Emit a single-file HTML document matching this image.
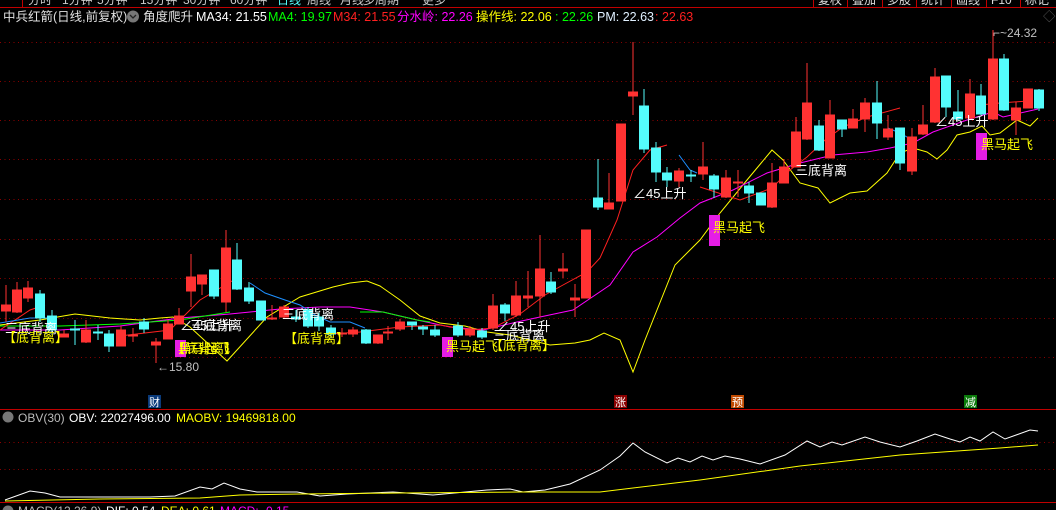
<!DOCTYPE html>
<html><head><meta charset="utf-8"><style>
html,body{margin:0;padding:0;background:#000;width:1056px;height:510px;overflow:hidden}
svg{display:block}
text{font-family:"Liberation Sans","Noto Sans CJK SC",sans-serif}
</style></head><body>
<svg width="1056" height="510" viewBox="0 0 1056 510" xmlns="http://www.w3.org/2000/svg">
<rect width="1056" height="510" fill="#000"/>
<!-- top menu (cut) -->
<g font-size="12" fill="#ccc">
<text x="28" y="4">分时</text><text x="62" y="4">1分钟</text><text x="97" y="4">5分钟</text><text x="140" y="4">15分钟</text><text x="183" y="4">30分钟</text><text x="230" y="4">60分钟</text>
<text x="277" y="4" fill="#55ffff">日线</text><text x="307" y="4">周线</text><text x="340" y="4">月线</text><text x="363" y="4">多周期</text><text x="422" y="4">更多</text>
</g>
<g stroke="#c00000" fill="none">
<line x1="0" y1="7.5" x2="1056" y2="7.5"/>
<line x1="22.5" y1="0" x2="22.5" y2="7"/>
<line x1="813.5" y1="0" x2="813.5" y2="7"/><line x1="847.5" y1="0" x2="847.5" y2="7"/><line x1="882.5" y1="0" x2="882.5" y2="7"/><line x1="916.5" y1="0" x2="916.5" y2="7"/><line x1="951.5" y1="0" x2="951.5" y2="7"/><line x1="986.5" y1="0" x2="986.5" y2="7"/><line x1="1020.5" y1="0" x2="1020.5" y2="7"/>
</g>
<g font-size="12" fill="#ddd"><text x="818" y="4">复权</text><text x="852" y="4">叠加</text><text x="887" y="4">多股</text><text x="921" y="4">统计</text><text x="956" y="4">画线</text><text x="991" y="4">F10</text><text x="1025" y="4">标记</text></g>
<!-- header -->
<g font-size="12.5">
<text x="3" y="21" fill="#e0e0e0">中兵红箭(日线,前复权)</text>
<circle cx="133" cy="16.5" r="6" fill="#777"/><path d="M130 15l3 3 3-3" stroke="#222" stroke-width="1.3" fill="none"/>
<text x="143" y="21" fill="#e0e0e0">角度爬升</text>
<text x="196" y="21" fill="#fff">MA34: 21.55</text>
<text x="268" y="21" fill="#00ff00">MA4: 19.97</text>
<text x="333" y="21" fill="#ff2020">M34: 21.55</text>
<text x="397" y="21" fill="#ff00ff">分水岭: 22.26</text>
<text x="476" y="21" fill="#ffff00">操作线: 22.06</text>
<text x="555" y="21" fill="#00ff00">: 22.26</text>
<text x="597" y="21" fill="#e0f0ff">PM: 22.63</text>
<text x="655" y="21" fill="#ff2020">: 22.63</text>
<text x="1043" y="21" fill="#555">◇</text>
</g>
<!-- grid -->
<g stroke="#8a0000" stroke-dasharray="1 3.5">
<line x1="0" y1="42.5" x2="1056" y2="42.5"/><line x1="0" y1="81.5" x2="1056" y2="81.5"/><line x1="0" y1="120.5" x2="1056" y2="120.5"/><line x1="0" y1="159.5" x2="1056" y2="159.5"/><line x1="0" y1="199.5" x2="1056" y2="199.5"/><line x1="0" y1="239.5" x2="1056" y2="239.5"/><line x1="0" y1="278.5" x2="1056" y2="278.5"/><line x1="0" y1="318.5" x2="1056" y2="318.5"/><line x1="0" y1="357.5" x2="1056" y2="357.5"/>
<line x1="0" y1="442.5" x2="1056" y2="442.5"/><line x1="0" y1="469.5" x2="1056" y2="469.5"/>
</g>
<!-- MA lines -->
<polyline fill="none" stroke="#ffff00" points="0,325 40,320 75,314 110,318 140,320 160,318 173,317 190,327 227,361 267,317 300,297 333,287 350,283 367,281 380,286 400,300 420,316 440,323 465,326 487,332 510,335 550,345 575,343 590,340 604,333 620,340 633,372 645,340 675,265 700,240 720,213 747,180 772,150 783,160 800,183 818,188 830,203 850,193 867,191 887,173 900,153 913,148 927,152 937,159 947,150 957,135 970,132 982,126 990,135 1000,133 1017,120 1030,126 1038,118"/>
<polyline fill="none" stroke="#ff00ff" points="0,330 60,330 120,326 180,318 230,314 280,309 320,307 350,307 383,312 417,320 450,327 483,330 517,322 540,317 573,310 610,285 633,252 657,237 680,218 700,203 733,190 767,173 800,163 833,155 867,152 890,148 913,143 933,132 967,120 993,112 1003,117 1038,109"/>
<polyline fill="none" stroke="#00ff00" points="0,326 60,326 120,324 150,322 180,320 230,312"/>
<polyline fill="none" stroke="#00ff00" points="360,312 383,312 417,320 430,322"/>
<g fill="none" stroke="#ff2020">
<polyline points="0,330 30,310 45,305"/>
<polyline points="120,336 170,330 200,300 237,278"/>
<polyline points="330,334 360,332 400,327 440,325 470,330 493,328 520,314 545,295 563,285 587,272 600,258 617,220 633,170 650,150 667,145"/>
<polyline points="700,187 740,200 772,188 790,170 807,157 825,140 843,127 867,117 900,108"/>
<polyline points="980,105 1000,103 1028,101"/>
</g>
<g fill="none" stroke="#1e90ff">
<polyline points="0,323 30,318 52,318"/>
<polyline points="250,283 265,293 285,300 300,305 315,315 330,322 350,322 365,328"/>
<polyline points="679,155 690,170 697,173"/>
<polyline points="888,128 900,133 912,140"/>
</g>
<!-- candles -->
<g fill="#ff3232" stroke="#ff3232">
<line x1="6" y1="285" x2="6" y2="322"/><rect x="1.5" y="305" width="9" height="6"/>
<line x1="17" y1="282" x2="17" y2="313"/><rect x="12.5" y="290" width="9" height="22"/>
<line x1="28" y1="281" x2="28" y2="302"/><rect x="23.5" y="288" width="9" height="10"/>
<line x1="64" y1="330" x2="64" y2="337"/><rect x="59.5" y="334" width="9" height="3"/>
<line x1="86" y1="320" x2="86" y2="343"/><rect x="81.5" y="330" width="9" height="12"/>
<line x1="121" y1="326" x2="121" y2="346"/><rect x="116.5" y="330" width="9" height="16"/>
<line x1="133" y1="328" x2="133" y2="342"/><rect x="128.5" y="335" width="9" height="1"/>
<line x1="156" y1="338" x2="156" y2="363"/><rect x="151.5" y="342" width="9" height="3"/>
<line x1="168" y1="320" x2="168" y2="339"/><rect x="163.5" y="324" width="9" height="15"/>
<line x1="179" y1="308" x2="179" y2="324"/><rect x="174.5" y="316" width="9" height="8"/>
<line x1="191" y1="254" x2="191" y2="307"/><rect x="186.5" y="277" width="9" height="14"/>
<line x1="202" y1="275" x2="202" y2="295"/><rect x="197.5" y="275" width="9" height="9"/>
<line x1="226" y1="230" x2="226" y2="312"/><rect x="221.5" y="248" width="9" height="54"/>
<line x1="272" y1="305" x2="272" y2="320"/><rect x="267.5" y="318" width="9" height="1"/>
<line x1="284" y1="305" x2="284" y2="318"/><rect x="279.5" y="307" width="9" height="10"/>
<line x1="342" y1="328" x2="342" y2="337"/><rect x="337.5" y="333" width="9" height="1"/>
<line x1="353" y1="327" x2="353" y2="337"/><rect x="348.5" y="330" width="9" height="4"/>
<line x1="378" y1="335" x2="378" y2="344"/><rect x="373.5" y="335" width="9" height="8"/>
<line x1="388" y1="326" x2="388" y2="340"/><rect x="383.5" y="332" width="9" height="1"/>
<line x1="400" y1="319" x2="400" y2="331"/><rect x="395.5" y="322" width="9" height="7"/>
<line x1="470" y1="326" x2="470" y2="337"/><rect x="465.5" y="329" width="9" height="6"/>
<line x1="493" y1="294" x2="493" y2="330"/><rect x="488.5" y="306" width="9" height="22"/>
<line x1="516" y1="281" x2="516" y2="317"/><rect x="511.5" y="296" width="9" height="19"/>
<line x1="528" y1="271" x2="528" y2="307"/><rect x="523.5" y="296" width="9" height="2"/>
<line x1="540" y1="235" x2="540" y2="317"/><rect x="535.5" y="269" width="9" height="27"/>
<line x1="563" y1="253" x2="563" y2="278"/><rect x="558.5" y="269" width="9" height="2"/>
<line x1="575" y1="284" x2="575" y2="317"/><rect x="570.5" y="298" width="9" height="2"/>
<rect x="581.5" y="230" width="9" height="68"/>
<line x1="609" y1="173" x2="609" y2="209"/><rect x="604.5" y="203" width="9" height="6"/>
<rect x="616.5" y="124" width="9" height="77"/>
<line x1="633" y1="42" x2="633" y2="115"/><rect x="628.5" y="92" width="9" height="4"/>
<line x1="679" y1="168" x2="679" y2="187"/><rect x="674.5" y="171" width="9" height="10"/>
<line x1="703" y1="142" x2="703" y2="180"/><rect x="698.5" y="167" width="9" height="7"/>
<line x1="726" y1="170" x2="726" y2="198"/><rect x="721.5" y="178" width="9" height="19"/>
<line x1="738" y1="170" x2="738" y2="197"/><rect x="733.5" y="182" width="9" height="1"/>
<line x1="772" y1="163" x2="772" y2="208"/><rect x="767.5" y="183" width="9" height="24"/>
<line x1="784" y1="159" x2="784" y2="183"/><rect x="779.5" y="167" width="9" height="16"/>
<line x1="796" y1="117" x2="796" y2="167"/><rect x="791.5" y="132" width="9" height="35"/>
<line x1="807" y1="63" x2="807" y2="140"/><rect x="802.5" y="103" width="9" height="36"/>
<line x1="830" y1="100" x2="830" y2="158"/><rect x="825.5" y="115" width="9" height="43"/>
<line x1="853" y1="109" x2="853" y2="128"/><rect x="848.5" y="119" width="9" height="9"/>
<line x1="865" y1="98" x2="865" y2="132"/><rect x="860.5" y="103" width="9" height="16"/>
<line x1="888" y1="115" x2="888" y2="140"/><rect x="883.5" y="129" width="9" height="8"/>
<line x1="912" y1="128" x2="912" y2="175"/><rect x="907.5" y="137" width="9" height="34"/>
<line x1="923" y1="105" x2="923" y2="135"/><rect x="918.5" y="125" width="9" height="9"/>
<line x1="935" y1="68" x2="935" y2="123"/><rect x="930.5" y="77" width="9" height="45"/>
<line x1="970" y1="79" x2="970" y2="119"/><rect x="965.5" y="94" width="9" height="24"/>
<line x1="993" y1="30" x2="993" y2="120"/><rect x="988.5" y="59" width="9" height="60"/>
<line x1="1016" y1="102" x2="1016" y2="135"/><rect x="1011.5" y="108" width="9" height="12"/>
<rect x="1023.5" y="89" width="9" height="19"/>
</g>
<g fill="#54fcfc" stroke="#54fcfc">
<line x1="40" y1="290" x2="40" y2="322"/><rect x="35.5" y="294" width="9" height="24"/>
<line x1="52" y1="310" x2="52" y2="335"/><rect x="47.5" y="316" width="9" height="14"/>
<line x1="75" y1="320" x2="75" y2="345"/><rect x="70.5" y="329" width="9" height="1"/>
<line x1="98" y1="325" x2="98" y2="340"/><rect x="93.5" y="332" width="9" height="1"/>
<line x1="109" y1="330" x2="109" y2="352"/><rect x="104.5" y="334" width="9" height="12"/>
<line x1="144" y1="318" x2="144" y2="333"/><rect x="139.5" y="322" width="9" height="7"/>
<line x1="214" y1="270" x2="214" y2="299"/><rect x="209.5" y="270" width="9" height="26"/>
<line x1="237" y1="243" x2="237" y2="290"/><rect x="232.5" y="260" width="9" height="29"/>
<line x1="249" y1="282" x2="249" y2="304"/><rect x="244.5" y="288" width="9" height="13"/>
<rect x="256.5" y="301" width="9" height="19"/>
<line x1="296" y1="310" x2="296" y2="322"/><rect x="291.5" y="317" width="9" height="2"/>
<line x1="308" y1="307" x2="308" y2="328"/><rect x="303.5" y="310" width="9" height="16"/>
<line x1="319" y1="313" x2="319" y2="331"/><rect x="314.5" y="317" width="9" height="9"/>
<line x1="331" y1="325" x2="331" y2="338"/><rect x="326.5" y="328" width="9" height="6"/>
<line x1="366" y1="329" x2="366" y2="344"/><rect x="361.5" y="330" width="9" height="13"/>
<line x1="412" y1="322" x2="412" y2="330"/><rect x="407.5" y="322" width="9" height="3"/>
<line x1="423" y1="325" x2="423" y2="335"/><rect x="418.5" y="327" width="9" height="2"/>
<line x1="435" y1="325" x2="435" y2="337"/><rect x="430.5" y="330" width="9" height="5"/>
<line x1="458" y1="322" x2="458" y2="337"/><rect x="453.5" y="326" width="9" height="9"/>
<line x1="482" y1="328" x2="482" y2="339"/><rect x="477.5" y="331" width="9" height="6"/>
<line x1="505" y1="303" x2="505" y2="321"/><rect x="500.5" y="305" width="9" height="8"/>
<line x1="551" y1="272" x2="551" y2="294"/><rect x="546.5" y="282" width="9" height="10"/>
<line x1="598" y1="159" x2="598" y2="210"/><rect x="593.5" y="198" width="9" height="9"/>
<line x1="644" y1="89" x2="644" y2="153"/><rect x="639.5" y="106" width="9" height="43"/>
<line x1="656" y1="142" x2="656" y2="182"/><rect x="651.5" y="148" width="9" height="24"/>
<line x1="667" y1="167" x2="667" y2="187"/><rect x="662.5" y="173" width="9" height="7"/>
<line x1="691" y1="170" x2="691" y2="182"/><rect x="686.5" y="175" width="9" height="1"/>
<line x1="714" y1="174" x2="714" y2="198"/><rect x="709.5" y="176" width="9" height="13"/>
<line x1="749" y1="182" x2="749" y2="203"/><rect x="744.5" y="186" width="9" height="7"/>
<rect x="756.5" y="193" width="9" height="12"/>
<line x1="819" y1="120" x2="819" y2="151"/><rect x="814.5" y="126" width="9" height="24"/>
<line x1="842" y1="120" x2="842" y2="137"/><rect x="837.5" y="120" width="9" height="9"/>
<line x1="877" y1="81" x2="877" y2="139"/><rect x="872.5" y="103" width="9" height="20"/>
<line x1="900" y1="128" x2="900" y2="170"/><rect x="895.5" y="128" width="9" height="35"/>
<line x1="946" y1="76" x2="946" y2="117"/><rect x="941.5" y="76" width="9" height="31"/>
<line x1="958" y1="90" x2="958" y2="120"/><rect x="953.5" y="112" width="9" height="7"/>
<line x1="981" y1="84" x2="981" y2="115"/><rect x="976.5" y="96" width="9" height="18"/>
<line x1="1004" y1="54" x2="1004" y2="111"/><rect x="999.5" y="59" width="9" height="51"/>
<line x1="1039" y1="89" x2="1039" y2="111"/><rect x="1034.5" y="90" width="9" height="18"/>
</g>
<!-- magenta boxes -->
<g fill="#e51de5">
<rect x="175" y="340" width="11" height="17"/>
<rect x="442" y="337" width="11" height="20"/>
<rect x="709" y="215" width="11" height="31"/>
<rect x="976" y="133" width="11" height="27"/>
</g>
<!-- labels -->
<g font-size="13">
<g fill="#fff">
<text x="5" y="333">三底背离</text>
<text x="180" y="330">∠45上升</text>
<text x="190" y="330">三底背离</text>
<text x="282" y="319">三底背离</text>
<text x="497" y="331">∠45上升</text>
<text x="493" y="340">三底背离</text>
<text x="633" y="198">∠45上升</text>
<text x="795" y="175">三底背离</text>
<text x="935" y="126">∠45上升</text>
</g>
<g fill="#ffff00">
<text x="3" y="342">【底背离】</text>
<text x="172" y="353">【底背离】</text>
<text x="178" y="353">黑马起飞</text>
<text x="284" y="343">【底背离】</text>
<text x="446" y="351">黑马起飞</text>
<text x="490" y="350">【底背离】</text>
<text x="713" y="232">黑马起飞</text>
<text x="981" y="149">黑马起飞</text>
</g>
<g fill="#c0c0c0" font-size="12">
<text x="157" y="371">←15.80</text>
<text x="993" y="37">⌐~24.32</text>
</g>
</g>
<!-- event markers -->
<g font-size="11" fill="#fff">
<rect x="148" y="395" width="13" height="13" fill="#0a3a7a"/><text x="149" y="406">财</text>
<rect x="614" y="395" width="13" height="13" fill="#8a0000"/><text x="615" y="406">涨</text>
<rect x="731" y="395" width="13" height="13" fill="#c04a00"/><text x="732" y="406">预</text>
<rect x="964" y="395" width="13" height="13" fill="#0a7a0a"/><text x="965" y="406">减</text>
</g>
<!-- OBV panel -->
<line x1="0" y1="409.5" x2="1056" y2="409.5" stroke="#c00000"/>
<line x1="0" y1="502.5" x2="1056" y2="502.5" stroke="#c00000"/>
<g font-size="12">
<circle cx="8" cy="417" r="5.5" fill="#777"/>
<text x="18" y="422" fill="#bbb">OBV(30)</text>
<text x="69" y="422" fill="#fff">OBV: 22027496.00</text>
<text x="176" y="422" fill="#ffff00">MAOBV: 19469818.00</text>
</g>
<polyline fill="none" stroke="#fff" points="5,500 30,491 45,493 60,497 100,497 150,497 175,496 200,487 212,489 224,483 240,489 257,492 297,492 320,496 347,494 393,492 433,495 487,490 510,489 523,492 545,490 570,484 600,470 620,456 633,443 645,452 667,463 678,458 690,462 702,456 713,460 725,456 740,459 760,464 785,455 807,441 820,447 832,442 842,445 865,437 880,442 900,447 917,441 935,434 950,439 960,442 970,437 980,441 993,432 1005,439 1030,430 1038,431"/>
<polyline fill="none" stroke="#ffff00" points="5,501 100,499 200,498 240,495 300,494 400,493 520,492 600,492 700,480 800,466 900,455 1000,448 1038,445"/>
<!-- MACD -->
<g font-size="12">
<circle cx="8" cy="511" r="5.5" fill="#777"/>
<text x="18" y="515" fill="#bbb">MACD(12,26,9)</text>
<text x="106" y="515" fill="#fff">DIF: 0.54</text>
<text x="161" y="515" fill="#ffff00">DEA: 0.61</text>
<text x="220" y="515" fill="#ff00ff">MACD: -0.15</text>
</g>
</svg>
</body></html>
